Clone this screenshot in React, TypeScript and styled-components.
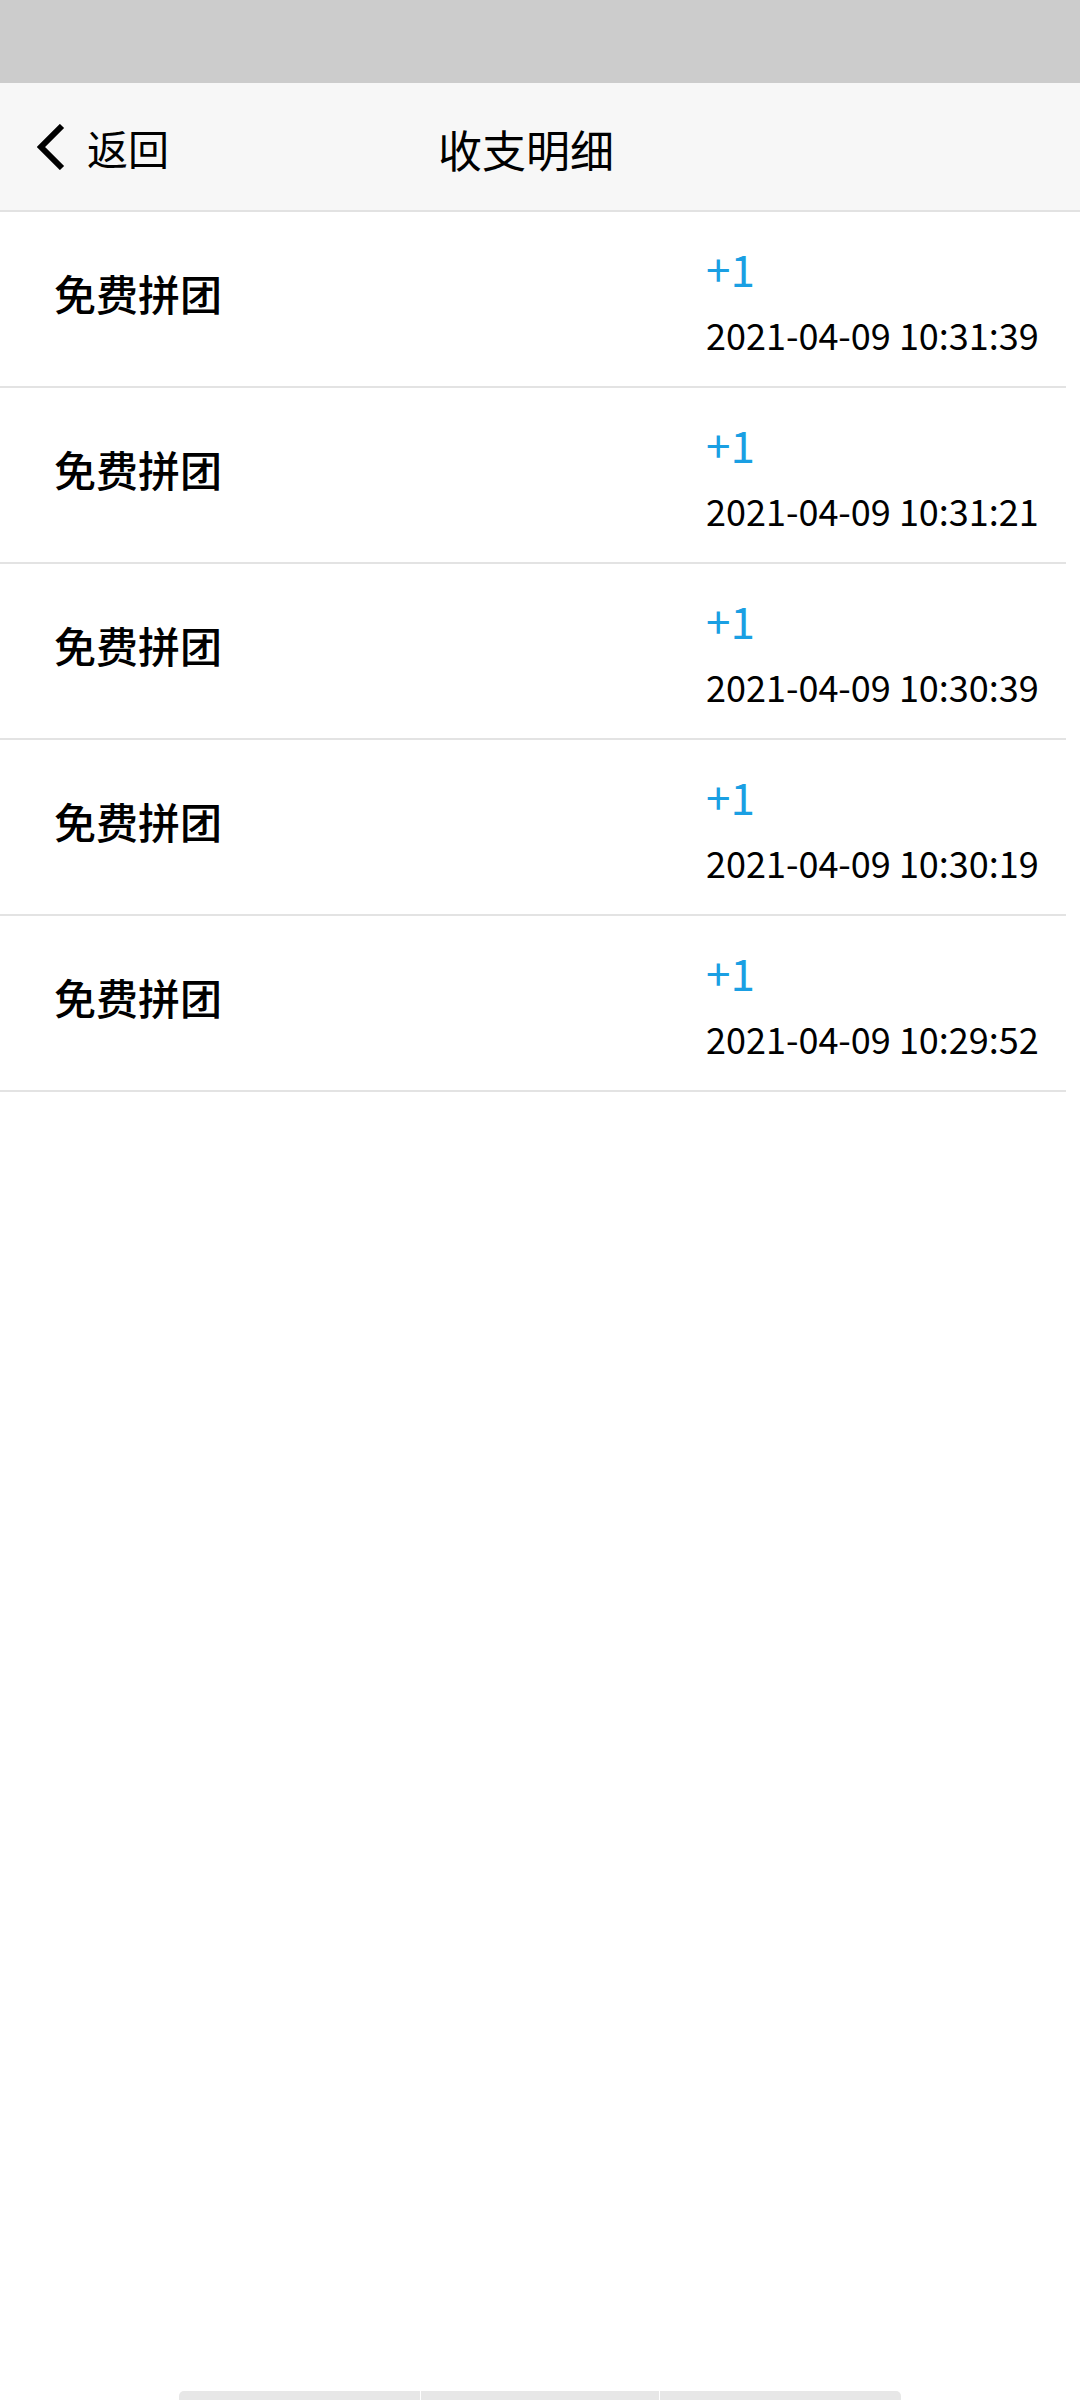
import styled, { createGlobalStyle } from 'styled-components';

const GlobalStyle = createGlobalStyle`
  body {
    margin: 0;
    background: #ffffff;
    font-family: "Noto Sans CJK SC", "Noto Sans", sans-serif;
    color: #000000;
  }
`;

const Page = styled.div`
  min-height: 2400px;
  display: flex;
  flex-direction: column;
  background: #ffffff;
`;

const StatusBar = styled.div`
  height: 83px;
  background: #cccccc;
`;

const Header = styled.header`
  height: 127px;
  display: grid;
  grid-template-columns: 438px auto 1fr;
  align-items: center;
  background: #f7f7f7;
  border-bottom: 2px solid #e2e2e2;
`;

const BackButton = styled.button`
  display: flex;
  align-items: center;
  gap: 22px;
  padding: 0 0 0 37px;
  border: none;
  background: none;
  font-family: inherit;
  font-size: 41px;
  line-height: 48px;
  color: #000000;
  cursor: pointer;
`;

const Title = styled.h1`
  margin: 0;
  font-size: 44px;
  font-weight: 400;
  line-height: 50px;
  color: #000000;
  padding-top: 4px;
`;

const List = styled.ul`
  list-style: none;
  margin: 0;
  padding: 0;
`;

const Row = styled.li`
  width: 1066px;
  height: 174px;
  display: flex;
  align-items: center;
  border-bottom: 2px solid #e3e3e3;
`;

const Label = styled.span`
  flex: 1;
  padding-left: 54px;
  margin-bottom: 12px;
  font-size: 42px;
  font-weight: 500;
  line-height: 42px;
  color: #000000;
`;

const Detail = styled.div`
  width: 360px;
  display: flex;
  flex-direction: column;
  gap: 19px;
`;

const Amount = styled.span`
  font-size: 44px;
  line-height: 50px;
  color: #1a9fe3;
`;

const Time = styled.span`
  font-size: 36px;
  line-height: 44px;
  color: #000000;
`;

const BottomStrip = styled.div`
  margin-top: auto;
  margin-left: 179px;
  width: 722px;
  height: 9px;
  display: grid;
  grid-template-columns: 241px 238px 1fr;
  gap: 1px;
  border-radius: 5px 5px 0 0;
  overflow: hidden;
`;

const StripCell = styled.div`
  background: #e7e7e7;
`;

const records = [
  { name: '免费拼团', amount: '+1', time: '2021-04-09 10:31:39' },
  { name: '免费拼团', amount: '+1', time: '2021-04-09 10:31:21' },
  { name: '免费拼团', amount: '+1', time: '2021-04-09 10:30:39' },
  { name: '免费拼团', amount: '+1', time: '2021-04-09 10:30:19' },
  { name: '免费拼团', amount: '+1', time: '2021-04-09 10:29:52' },
];

function ChevronLeft() {
  return (
    <svg width="28" height="46" viewBox="0 0 28 46">
      <polyline
        points="25,2 4,23 25,44"
        fill="none"
        stroke="#000000"
        strokeWidth="6"
        strokeLinejoin="miter"
      />
    </svg>
  );
}

export default function App() {
  return (
    <Page>
      <GlobalStyle />
      <StatusBar />
      <Header>
        <BackButton>
          <ChevronLeft />
          返回
        </BackButton>
        <Title>收支明细</Title>
      </Header>
      <List>
        {records.map((r, i) => (
          <Row key={i}>
            <Label>{r.name}</Label>
            <Detail>
              <Amount>{r.amount}</Amount>
              <Time>{r.time}</Time>
            </Detail>
          </Row>
        ))}
      </List>
      <BottomStrip>
        <StripCell />
        <StripCell />
        <StripCell />
      </BottomStrip>
    </Page>
  );
}
